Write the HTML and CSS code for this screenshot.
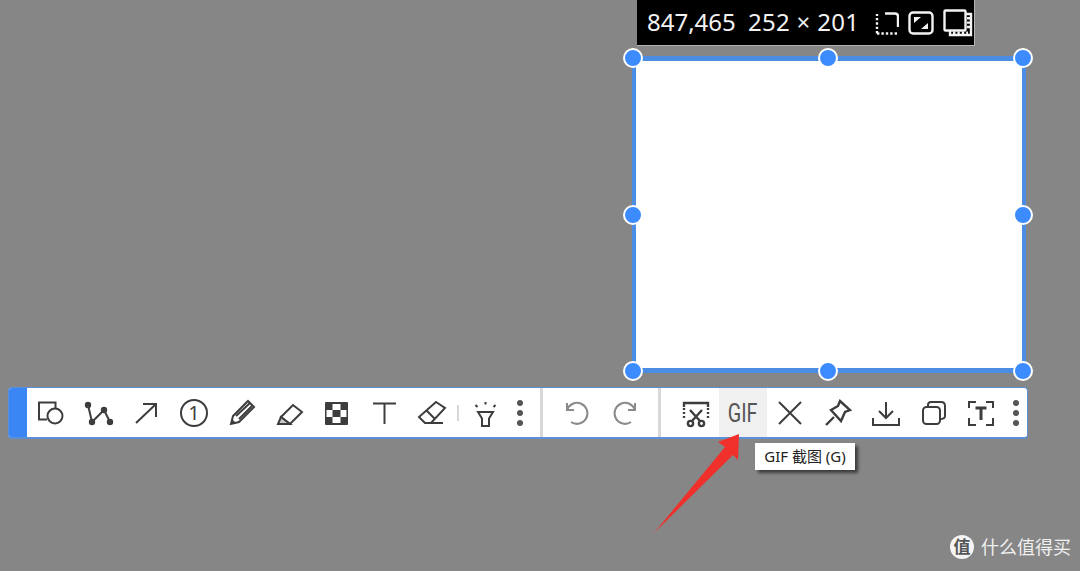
FILE: index.html
```html
<!DOCTYPE html>
<html lang="en">
<head>
    <meta charset="UTF-8">
    <meta name="viewport" content="width=device-width, initial-scale=1.0">
    <title>Screenshot toolbar</title>
    <link rel="stylesheet" href="styles.css">
</head>
<body>
    <div class="info-bar">
        <span class="info-pos">847,465</span>
        <span class="info-size">252 × 201</span>
        <svg class="info-icon" width="24" height="24" viewBox="0 0 24 24"><path class="dash" d="M2 22.5V3M2 22.5H23"/><path class="solid" d="M10 2.5H20Q23 2.5 23 5.5V16"/></svg>
        <svg class="info-icon" width="26" height="24" viewBox="0 0 26 24"><rect class="solid" x="1.5" y="1.5" width="23" height="21" rx="3.5"/><path class="fill" d="M6 6H13L6 12ZM20 18H13L20 12Z"/></svg>
        <svg class="info-icon" width="30" height="28" viewBox="0 0 30 28"><rect class="solid" x="1.5" y="1.5" width="21" height="20" rx="1"/><path class="solid" d="M23 5H28V26H7V22"/><path class="dash thick" d="M25.5 8V20M10 24H25"/></svg>
    </div>

    <div class="selection">
        <span class="handle h-tl"></span>
        <span class="handle h-tc"></span>
        <span class="handle h-tr"></span>
        <span class="handle h-ml"></span>
        <span class="handle h-mr"></span>
        <span class="handle h-bl"></span>
        <span class="handle h-bc"></span>
        <span class="handle h-br"></span>
    </div>

    <div class="toolbar">
        <div class="grip"></div>

        <div class="tool"><svg viewBox="0 0 30 30"><path d="M11 21.5H3V4.5H19.5V10.5"/><circle cx="19" cy="18" r="7.5"/></svg></div>
        <div class="tool"><svg viewBox="0 0 30 30"><path d="M4 7L8 24L20 12L26 24"/><circle class="dot" cx="4" cy="7" r="3.2"/><circle class="dot" cx="8" cy="24" r="3.2"/><circle class="dot" cx="20" cy="12" r="3.2"/><circle class="dot" cx="26" cy="24" r="3.2"/></svg></div>
        <div class="tool"><svg viewBox="0 0 30 30"><path d="M5 25L25 6M12 6H25V19"/></svg></div>
        <div class="tool"><svg viewBox="0 0 30 30"><circle cx="15" cy="15" r="13"/><text class="num" x="15" y="22">1</text></svg></div>
        <div class="tool"><svg viewBox="0 0 30 30"><path d="M4 26L6 18L21 3L27 9L12 24Z"/><path d="M9 18L23 5M12 21L25 8"/><path class="dot" d="M4 26L5 21L9 25Z"/></svg></div>
        <div class="tool"><svg viewBox="0 0 30 30"><path d="M7 19L19 7L28 14L16 26Z"/><path class="pale" d="M7 19L4 26H12L16 26Z"/></svg></div>
        <div class="tool"><svg viewBox="0 0 30 30"><rect class="dot" x="3" y="4" width="23" height="23" rx="1"/><rect class="blank" x="10.5" y="6" width="8" height="6"/><rect class="blank" x="4.5" y="12" width="6" height="7"/><rect class="blank" x="18.5" y="12" width="6" height="7"/><rect class="blank" x="10.5" y="19" width="8" height="6"/></svg></div>
        <div class="tool"><svg viewBox="0 0 30 30"><path d="M3 5.5H26M14.5 5.5V26"/></svg></div>
        <div class="tool"><svg viewBox="0 0 30 30"><path d="M19 4L28 10L14 25H8L2 19ZM9 12L18 21M14 25H26"/></svg></div>
        <div class="sep-short"></div>
        <div class="tool"><svg viewBox="0 0 30 30"><path d="M8 14H23L19 20.5V28H12V20.5Z"/><path d="M15.5 4V6.5M5.5 7L7.5 9M25.5 7L23.5 9"/></svg></div>
        <div class="dots"><span></span><span></span><span></span></div>

        <div class="sep"></div>
        <div class="tool tool-muted"><svg viewBox="0 0 30 30"><path d="M5 5V12H12M5 12A10.5 10.5 0 1 1 9 24"/></svg></div>
        <div class="tool tool-muted"><svg viewBox="0 0 30 30"><path d="M25 5V12H18M25 12A10.5 10.5 0 1 0 21 24"/></svg></div>
        <div class="sep"></div>

        <div class="tool tool-heavy"><svg viewBox="0 0 30 30"><path d="M4 9V5H28V9"/><path class="thin-dash" d="M4 10V22M28 10V22"/><path d="M10 12L20 23M22 12L12 23"/><circle cx="10.5" cy="25.5" r="2.6"/><circle cx="21.5" cy="25.5" r="2.6"/></svg></div>
        <div class="tool tool-active"><span class="gif">GIF</span></div>
        <div class="tool"><svg viewBox="0 0 30 30"><path d="M4 4L26 26M26 4L4 26"/></svg></div>
        <div class="tool tool-heavy"><svg viewBox="0 0 30 30"><path d="M17 3L27 12L22 14L18 23L8 12L15 8ZM3 27L11 19"/></svg></div>
        <div class="tool"><svg viewBox="0 0 30 30"><path d="M15 4V20M8 13L15 20L22 13M2 20V27H28V20"/></svg></div>
        <div class="tool"><svg viewBox="0 0 30 30"><rect x="4" y="9" width="17" height="17" rx="3.5"/><path d="M9 9V7Q9 4 12 4H22Q26 4 26 8V18Q26 21 21 21"/></svg></div>
        <div class="tool"><svg viewBox="0 0 30 30"><path d="M3 10V4H10M20 4H27V10M3 20V27H10M20 27H27V20"/><path class="bold" d="M9.5 10H20.5M15 10V22"/></svg></div>
        <div class="dots"><span></span><span></span><span></span></div>
    </div>

    <svg class="pointer" width="90" height="104" viewBox="0 0 90 104">
        <path d="M85 0L64 8L71 13L0 99L79 21L84 26Z"/>
    </svg>

    <div class="tooltip">GIF 截图 (G)</div>

    <div class="watermark">
        <span class="wm-logo">值</span>
        <span class="wm-name">什么值得买</span>
    </div>
</body>
</html>
```

FILE: styles.css
```css
:root {
    --page-gray: #868686;
    --blue: #4a8de2;
    --handle-blue: #3c8cff;
    --icon-color: #3d3d3d;
    --muted-color: #8a8a8a;
}

body {
    margin: 0;
    width: 1080px;
    height: 571px;
    overflow: hidden;
    position: relative;
    background-color: var(--page-gray);
    font-family: "Noto Sans", "Noto Sans CJK SC", sans-serif;
}

/* size readout above the selection */
.info-bar {
    position: absolute;
    left: 637px;
    top: 0;
    width: 338px;
    height: 46px;
    box-sizing: border-box;
    padding: 0 3px 2px 10px;
    display: flex;
    align-items: center;
    background: #000;
    border-right: 1px solid #b5b5b5;
    border-bottom: 1px solid #b5b5b5;
    color: #f2f2f2;
    font-size: 24px;
}

.info-pos {
    flex: none;
    width: 101px;
}

.info-size {
    flex: none;
    width: 127px;
    letter-spacing: 0.3px;
}

.info-icon {
    flex: none;
    margin-top: 2px;
}

.info-icon:nth-of-type(2),
.info-icon:nth-of-type(3) {
    margin-left: 9px;
}

.info-icon path,
.info-icon rect {
    fill: none;
    stroke: #f2f2f2;
    stroke-width: 2.4;
}

.info-icon .dash {
    stroke-dasharray: 2.4 2;
}

.info-icon .thick {
    stroke-width: 3;
}

.info-icon .fill {
    fill: #f2f2f2;
    stroke: none;
}

/* selection box */
.selection {
    position: absolute;
    left: 632px;
    top: 56px;
    width: 394px;
    height: 317px;
    box-sizing: border-box;
    background: #fff;
    border: solid var(--blue);
    border-width: 5px 4px;
}

.handle {
    position: absolute;
    width: 16px;
    height: 16px;
    background: var(--handle-blue);
    border: 2px solid #fff;
    border-radius: 50%;
}

.h-tl { left: -13px; top: -13px; }
.h-tc { left: 182px; top: -13px; }
.h-tr { left: 377px; top: -13px; }
.h-ml { left: -13px; top: 144px; }
.h-mr { left: 377px; top: 144px; }
.h-bl { left: -13px; top: 300px; }
.h-bc { left: 182px; top: 300px; }
.h-br { left: 377px; top: 300px; }

/* toolbar */
.toolbar {
    position: absolute;
    left: 8px;
    top: 387px;
    width: 1020px;
    height: 52px;
    box-sizing: border-box;
    display: flex;
    align-items: stretch;
    background: #fff;
    border: 1px solid #5b8fd6;
    border-bottom-width: 2px;
    border-radius: 4px;
    overflow: hidden;
}

.grip {
    flex: none;
    width: 18px;
    background: #3b86f5;
}

.tool {
    flex: none;
    width: 47.7px;
    display: flex;
    align-items: center;
    justify-content: center;
}

.tool svg {
    width: 30px;
    height: 30px;
}

.tool path,
.tool circle,
.tool rect {
    fill: none;
    stroke: var(--icon-color);
    stroke-width: 2;
}

.tool .dot {
    fill: var(--icon-color);
    stroke: none;
}

.tool .blank {
    fill: #fff;
    stroke: none;
}

.tool .pale {
    fill: #c9c9c9;
}

.tool .bold {
    stroke-width: 3;
}

.tool .thin-dash {
    stroke-dasharray: 2 2;
}

.tool .num {
    font-family: "Noto Sans", sans-serif;
    font-size: 20px;
    text-anchor: middle;
    fill: var(--icon-color);
}

.tool-heavy path,
.tool-heavy circle {
    stroke-width: 2.4;
}

.tool-muted path {
    stroke: var(--muted-color);
}

.tool-active {
    background: #f0f0f0;
}

.gif {
    font-family: "Roboto", sans-serif;
    font-size: 26px;
    color: #555;
    transform: scaleX(0.76);
}

.dots {
    flex: none;
    width: 22px;
    display: flex;
    flex-direction: column;
    align-items: center;
    justify-content: center;
    gap: 4px;
}

.dots span {
    width: 6px;
    height: 6px;
    border-radius: 50%;
    background: #555;
}

.sep {
    flex: none;
    width: 3px;
    margin: 0 10.5px 0 9px;
    background: #d8d8d8;
}

.sep-short {
    flex: none;
    width: 2px;
    height: 16px;
    align-self: center;
    margin: 0 2px 0 1px;
    background: #d8d8d8;
}

/* red arrow drawn over the screenshot */
.pointer {
    position: absolute;
    left: 654px;
    top: 434px;
}

.pointer path {
    fill: #f0302a;
}

.tooltip {
    position: absolute;
    left: 755px;
    top: 443px;
    width: 100px;
    height: 27px;
    line-height: 27px;
    text-align: center;
    background: #fff;
    color: #222;
    font-size: 15px;
    white-space: nowrap;
    box-shadow: 3px 3px 3px rgba(0, 0, 0, 0.55);
}

.watermark {
    position: absolute;
    left: 950px;
    top: 535px;
    display: flex;
    align-items: center;
    gap: 7px;
    color: #f0f0f0;
}

.wm-logo {
    width: 24px;
    height: 24px;
    line-height: 24px;
    border-radius: 50%;
    text-align: center;
    background: #f4f4f4;
    color: #555;
    font-size: 17px;
    font-weight: 700;
}

.wm-name {
    font-size: 18px;
    line-height: 24px;
}
```
